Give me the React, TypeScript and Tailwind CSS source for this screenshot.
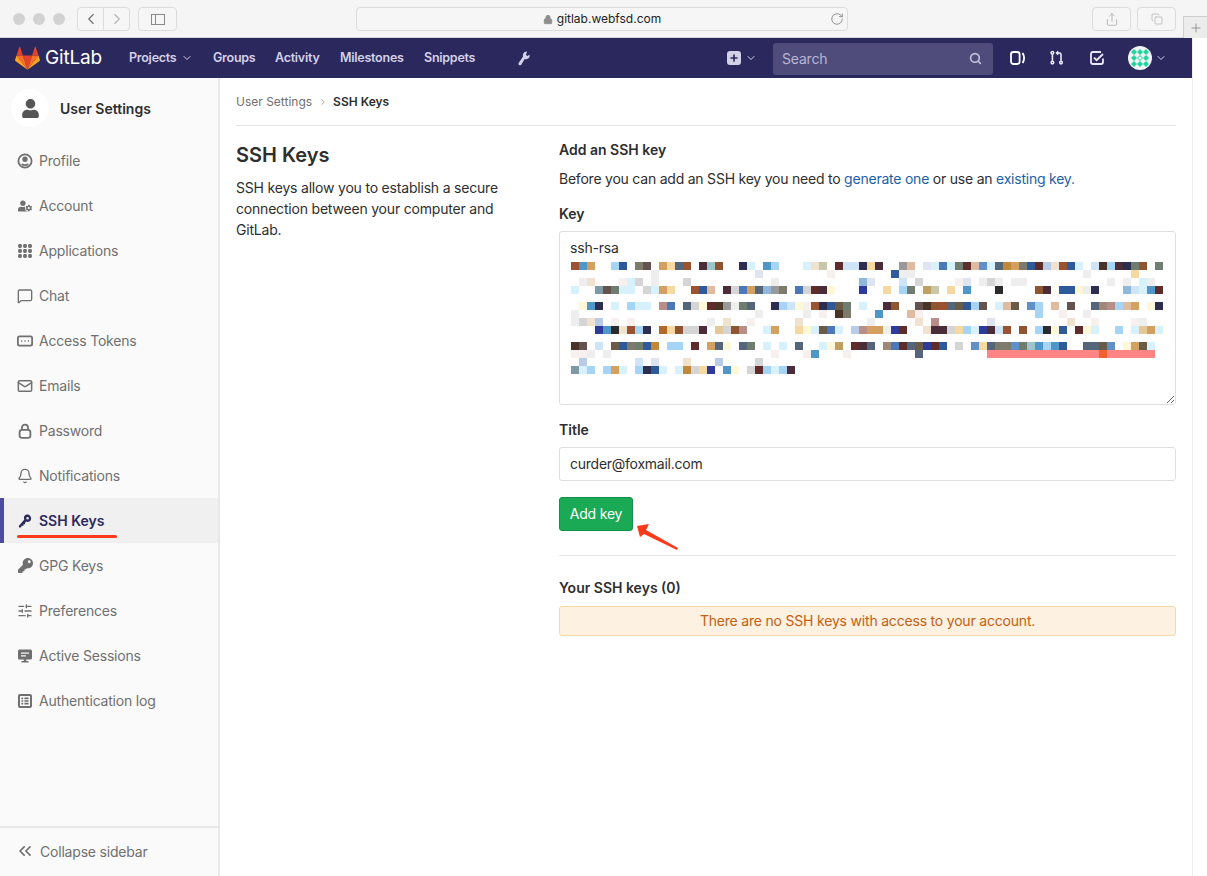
import { FC, ReactNode } from 'react'
import {
  ChevronDown,
  ChevronLeft,
  ChevronRight,
  ChevronsLeft,
  Lock,
  Mail,
  RotateCw,
  Search,
  Share,
  Copy,
  Plus,
  Bell,
  MessageSquare,
  SlidersHorizontal,
} from 'lucide-react'
import { FaKey, FaUserCog, FaUser } from 'react-icons/fa'

// palette for the blurred key block
const palette: Record<string, string> = {
  a: '#9a5230', b: '#5096c8', c: '#d4a060', d: '#a5d4f5', e: '#2f5a9a', f: '#7f7b6c',
  g: '#65524e', h: '#c08838', i: '#f6d9a0', j: '#55657a', k: '#4a2d38', l: '#5f2c2c',
  m: '#9cc5cc', n: '#8f5530', o: '#2d2d50', p: '#d8f2fd', q: '#efe3d0', r: '#c8c8a8',
  s: '#2e3a9a', t: '#cfe5f7', u: '#eeeeee', v: '#d5d5d5', w: '#999999', x: '#dfe5f0',
  y: '#fff8d8', z: '#f7f0ee', A: '#6f7c70', B: '#4a78b8', C: '#e0bba0', D: '#b88f88',
  E: '#6a5a48', F: '#2b2b2b', G: '#7f99a5', H: '#b8cce8', K: '#c0a060', L: '#90b8dc',
  M: '#ff8585', N: '#f06030', O: '#6090c8', P: '#a08878', Q: '#e5c898', R: '#b06a28',
  S: '#4a3428',
}

const keyRows = [
  '0a 1b 2c 5d 6e 8f 9g 11c 12i 13j 14a 16k 17m 18n 21o 22p 24b 25d 29p 30q 31r 33l 34t 35t 36o 37i 38k 41w 42C 44x 45p 46B 47p 48A 49l 50C 51O 52p 53j 54h 55c 56f 57e 58l 59H 60q 61a 62e 63p 65t 66S 67d 68k 69o 70A 71n 73A',
  '10u 23x 32z 40e 41u 42u 64u 70i',
  '0x 1u 2q 6z 7p 8v 10u 14v 25u 36L 37x 41t 43v 48z 49x 51u 52v 53u 55u 56u 67u 69u 71p 72u',
  '0p 3G 4g 5A 6p 7p 9v 10p 11c 12i 15a 16e 17C 19k 20v 21B 22c 23j 24L 25w 26f 28B 29v 30l 31k 32y 36s 39i 41d 42A 44K 45r 47i 49b 53F 58n 59k 61e 62e 63y 64u 65o 69L 70t 71p 72b 73l',
  '',
  '1y 2b 3o 5p 7d 8p 9p 11D 12B 14j 15v 16y 17l 18S 19w 20u 21A 22j 25o 26d 27t 28y 29z 30a 31o 32e 33E 34A 36p 39k 40n 43g 44S 45n 46a 47j 48E 49e 50d 51g 53p 54C 55E 57O 58d 60C 62g 65j 66P 67D 68d 69C 70c 72y 73o',
  '0u 23u 29u 31z 33S 34f 38b 42C 43z 58d 61z 64u',
  '0u 1v 2q 3H 5z 7z 17u 19q 22z 28q 37u 43q 45D 52x 62q 65z 70z 71u',
  '3s 4b 5F 6q 7a 8d 9o 11R 12i 13n 14v 15v 16k 18Q 19v 20n 21D 24p 25c 28i 29y 30p 31E 32B 33p 35H 36D 37c 38c 39u 40s 41l 44q 45k 46k 47v 48i 49d 50p 51s 52k 53t 54a 56n 58d 59F 60y 61e 63l 64y 65p 68d 70p 71Q 72c 73p',
  '',
  '0S 1g 3t 5E 6e 7f 8A 9e 10h 12d 13d 15l 17c 18j 19y 21j 22A 24p 26p 28j 31p 32y 33K 35l 36k 37j 39P 40B 41l 42j 43E 44s 45l 46e 48v 50O 51i 52j 53f 54f 55O 56A 57m 58b 59d 60b 61e 64j 65j 66E 67O 69y 70c 71E 72p',
  '0z 1z 2u 4u 25z 29z 30b 34z 43j 52M 53M 54M 55M 56M 57M 58M 59M 60M 61M 62M 63M 64M 65M 66N 67M 68M 69M 70M 71M 72M',
  '1H 8t 10x 14q 18H 23v',
  '0G 1p 2d 4d 5c 6p 8d 9o 10e 11p 13p 14h 15v 16i 17s 19b 20y 22v 23l 24d 25p 26d 27k',
].map((row) => {
  const cells: Record<number, string> = {}
  row.split(' ').filter(Boolean).forEach((c) => {
    cells[parseInt(c)] = palette[c[c.length - 1]]
  })
  return cells
})

const columns = Array.from({ length: 74 }, (_, i) => i)

const stroke = { fill: 'none', stroke: 'currentColor', strokeWidth: 1.8 }

const SideIcon: Record<string, ReactNode> = {
  Profile: (
    <svg viewBox="0 0 16 16" className="w-4 h-4" {...stroke}>
      <circle cx="8" cy="8" r="6.6" />
      <circle cx="8" cy="6.2" r="1.8" fill="currentColor" />
      <path d="M4.8 10.8c1.6 1.8 4.8 1.8 6.4 0" />
    </svg>
  ),
  Account: <FaUserCog className="w-[14px] h-[14px]" />,
  Applications: (
    <svg viewBox="0 0 14 14" className="w-[14px] h-[14px]" fill="currentColor">
      {[2, 7, 12].map((y) =>
        [2, 7, 12].map((x) => <rect key={`${x}-${y}`} x={x - 1.9} y={y - 1.9} width="3.8" height="3.8" rx="1.4" />),
      )}
    </svg>
  ),
  Chat: <MessageSquare className="w-4 h-4" strokeWidth={2} />,
  'Access Tokens': (
    <svg viewBox="0 0 16 16" className="w-4 h-4" {...stroke}>
      <rect x="0.9" y="3.4" width="14.2" height="9.2" rx="1.6" />
      <path d="M4.3 8h.9M7.6 8h.9M10.9 8h.9" />
    </svg>
  ),
  Emails: <Mail className="w-4 h-4" strokeWidth={2.2} />,
  Password: (
    <svg viewBox="0 0 16 16" className="w-4 h-4" {...stroke}>
      <rect x="2.6" y="6.8" width="10.8" height="8" rx="2.4" />
      <path d="M5 6.8V4.6a3 3 0 0 1 6 0v2.2" />
    </svg>
  ),
  Notifications: <Bell className="w-4 h-4" strokeWidth={2} />,
  'SSH Keys': (
    <svg viewBox="0 0 16 16" className="w-4 h-4" fill="currentColor">
      <path d="M9.2 1.6a4 4 0 0 1 4.6 5.6 4 4 0 0 1-4.6 1.4L8 9.9 8 11.3 6.5 11.3 6.5 12.8 5 12.8 3.7 14.6 2 14.6 1.8 13 7.3 6.6a4 4 0 0 1 1.9-5zM10.6 4a1.3 1.3 0 1 0 0 2.6 1.3 1.3 0 0 0 0-2.6z" />
    </svg>
  ),
  'GPG Keys': <FaKey className="w-[15px] h-[15px]" />,
  Preferences: <SlidersHorizontal className="w-4 h-4" strokeWidth={2} />,
  'Active Sessions': (
    <svg viewBox="0 0 16 16" className="w-4 h-4" fill="currentColor">
      <path fillRule="evenodd" d="M2.6 1.4h10.8c.9 0 1.6.7 1.6 1.6v7c0 .9-.7 1.6-1.6 1.6H9.2V13h2.3v1.6h-7V13h2.3v-1.4H2.6C1.7 11.6 1 10.9 1 10V3c0-.9.7-1.6 1.6-1.6zM4 4.4v1.4h8V4.4zm0 2.8v1.4h5V7.2z" />
    </svg>
  ),
  'Authentication log': (
    <svg viewBox="0 0 16 16" className="w-4 h-4" fill="currentColor">
      <path fillRule="evenodd" d="M3 1h10a2 2 0 0 1 2 2v10a2 2 0 0 1-2 2H3a2 2 0 0 1-2-2V3a2 2 0 0 1 2-2zm0 2v10h10V3zm1.4 1.6h1.8v1.6H4.4zm3 0h4.2v1.6H7.4zm-3 2.6h1.8v1.6H4.4zm3 0h4.2v1.6H7.4zm-3 2.6h1.8v1.6H4.4zm3 0h4.2v1.6H7.4z" />
    </svg>
  ),
}

const sideItems = Object.keys(SideIcon)

const GitLabLogo = () => (
  <svg viewBox="0 0 36 36" className="w-[25px] h-[25px]">
    <path fill="#e24329" d="M18 34.1 24.6 13.8H11.4z" />
    <path fill="#fc6d26" d="M18 34.1 11.4 13.8H2.1z" />
    <path fill="#fca326" d="M2.1 13.8.1 20c-.2.6 0 1.2.5 1.5L18 34.1z" />
    <path fill="#e24329" d="M2.1 13.8h9.3L7.4 1.5c-.2-.6-1-.6-1.2 0z" />
    <path fill="#fc6d26" d="M18 34.1 24.6 13.8h9.3z" />
    <path fill="#fca326" d="M33.9 13.8l2 6.2c.2.6 0 1.2-.5 1.5L18 34.1z" />
    <path fill="#e24329" d="M33.9 13.8h-9.3l4-12.3c.2-.6 1-.6 1.2 0z" />
  </svg>
)

const Avatar = () => (
  <svg viewBox="0 0 24 24" className="w-6 h-6">
    <circle cx="12" cy="12" r="12" fill="#f2f4f3" />
    {[6, 12, 18].map((y) =>
      [6, 12, 18].map((x) => (
        <path key={`${x}-${y}`} d={`M${x} ${y - 3}l3 3-3 3-3-3z`} fill="#1fd6a0" />
      )),
    )}
    <circle cx="12" cy="12" r="1.6" fill="#ffffff" />
  </svg>
)

const ChromeButton: FC<{ className: string; children: ReactNode }> = ({ className, children }) => (
  <div className={`h-[24px] flex items-center justify-center border border-[#dcdcdc] bg-[#f6f6f6] rounded-[4px] ${className}`}>
    {children}
  </div>
)

const BrowserBar = () => (
  <div className="h-[38px] shrink-0 bg-[#f5f5f5] border-b border-[#d6d6d6] flex items-start pt-[7px] pl-[13px] relative">
    <div className="flex items-center gap-2 h-[24px]">
      <span className="w-3 h-3 rounded-full bg-[#d2d2d2]" />
      <span className="w-3 h-3 rounded-full bg-[#d2d2d2]" />
      <span className="w-3 h-3 rounded-full bg-[#d2d2d2]" />
    </div>
    <div className="flex ml-3">
      <ChromeButton className="w-[27px] rounded-r-none">
        <ChevronLeft className="w-[18px] h-[18px] text-[#6e6e6e]" strokeWidth={1.5} />
      </ChromeButton>
      <ChromeButton className="w-[27px] -ml-px rounded-l-none">
        <ChevronRight className="w-[18px] h-[18px] text-[#b5b5b5]" strokeWidth={1.5} />
      </ChromeButton>
    </div>
    <ChromeButton className="w-[39px] ml-2">
      <span className="w-[14px] h-[11px] border border-[#8a8a8a] flex">
        <span className="w-[4px] border-r border-[#8a8a8a]" />
      </span>
    </ChromeButton>
    <ChromeButton className="w-[492px] ml-[179px] relative">
      <Lock className="w-[10px] h-[11px] text-[#8e8e8e] mr-[4px] fill-[#8e8e8e]" strokeWidth={2} />
      <span className="text-[12px] text-[#222]">gitlab.webfsd.com</span>
      <RotateCw className="absolute right-[3px] top-[4px] w-[14px] h-[14px] text-[#777]" strokeWidth={1.3} />
    </ChromeButton>
    <ChromeButton className="w-[39px] ml-[244px]">
      <Share className="w-[14px] h-[15px] text-[#a8a8a8]" strokeWidth={1.3} />
    </ChromeButton>
    <ChromeButton className="w-[39px] ml-[6px]">
      <Copy className="w-[12px] h-[12px] text-[#a8a8a8]" strokeWidth={1.3} />
    </ChromeButton>
    <div className="absolute left-[1183px] top-[16px] w-[24px] h-[22px] bg-[#ececec] border-l border-t border-[#cfcfcf] flex items-center justify-center">
      <Plus className="w-[14px] h-[14px] text-[#777]" strokeWidth={1.2} />
    </div>
  </div>
)

const NavBar = () => (
  <div className="h-[40px] shrink-0 flex">
    <div className="w-[1192px] bg-[#2b285e] flex items-center pl-[15px] text-[#d3d1e8]">
      <GitLabLogo />
      <span className="ml-[5px] w-[84px] text-[19px] text-white font-normal tracking-[-0.01em]">GitLab</span>
      <span className="text-[12.5px] font-semibold tracking-[-0.02em] flex items-center w-[84px]">
        Projects
        <ChevronDown className="w-[12px] h-[12px] ml-[5px]" strokeWidth={2} />
      </span>
      <span className="text-[12.5px] font-semibold tracking-[-0.02em] w-[62px]">Groups</span>
      <span className="text-[12.5px] font-semibold tracking-[-0.02em] w-[65px]">Activity</span>
      <span className="text-[12.5px] font-semibold tracking-[-0.02em] w-[84px]">Milestones</span>
      <span className="text-[12.5px] font-semibold tracking-[-0.02em] w-[92px]">Snippets</span>
      <svg viewBox="0 0 16 16" className="w-[15px] h-[15px]" fill="currentColor">
        <path d="M11 .6a4 4 0 0 0-3.500 5.300L3 12.400a1.700 1.700 0 0 0 2.600 2.200L9.300 8.600A4 4 0 0 0 14.400 3.700L12.300 5.400 10.500 4.200 11.800.7z" />
      </svg>
      <span className="ml-[196px] w-[14px] h-[14px] rounded-[3px] bg-[#d3d1e8] flex items-center justify-center">
        <Plus className="w-[10px] h-[10px] text-[#2b285e]" strokeWidth={4} />
      </span>
      <ChevronDown className="w-[12px] h-[12px] ml-[4px]" strokeWidth={2} />
      <div className="ml-[16px] w-[220px] h-[32px] bg-[#4f4b7b] rounded-[3px] flex items-center justify-between pl-[9px] pr-[11px] mt-[2px]">
        <span className="text-[14px] text-[#b8b6d4] pb-[2px] tracking-[-0.014em]">Search</span>
        <Search className="w-[13px] h-[13px] text-[#c5c3dc] -mt-[2px]" strokeWidth={3} />
      </div>
      <svg viewBox="0 0 16 16" className="w-4 h-4 ml-[17px] text-white" fill="none" stroke="currentColor" strokeWidth="1.8">
        <rect x="1" y="2" width="8.6" height="12" rx="2.4" />
        <path d="M12.6 3c1.8 3 1.8 7 0 10" />
      </svg>
      <svg viewBox="0 0 16 16" className="w-4 h-4 ml-[23px] text-[#e9e8f4]" fill="none" stroke="currentColor" strokeWidth="1.6">
        <circle cx="3.4" cy="2.8" r="1.3" />
        <path d="M3.4 4.2v6.6" />
        <circle cx="3.4" cy="12.6" r="1.3" />
        <path d="M7.8 3h2.6c1 0 1.6.7 1.6 1.6v6.2M9.2 1.4 7.6 3l1.6 1.6" />
        <circle cx="12" cy="12.6" r="1.3" />
      </svg>
      <svg viewBox="0 0 16 16" className="w-4 h-4 ml-[24px] text-[#e9e8f4]" fill="none" stroke="currentColor" strokeWidth="1.8">
        <path d="M14 8.4V12c0 1.2-.8 2-2 2H4c-1.2 0-2-.8-2-2V4c0-1.2.8-2 2-2h8" />
        <path d="m5 7.6 2.6 2.6 6.4-6.2" />
      </svg>
      <span className="ml-[23px]"><Avatar /></span>
      <ChevronDown className="w-[12px] h-[12px] ml-[3px]" strokeWidth={2} />
    </div>
    <div className="flex-1 bg-white border-l border-[#eeeeee]" />
  </div>
)

const Sidebar = () => (
  <div className="w-[220px] shrink-0 bg-[#fafafa] border-r-2 border-[#e8e8e8] flex flex-col">
    <div className="h-[60px] shrink-0 flex items-center pl-[11px]">
      <div className="w-[38px] h-[38px] rounded-full bg-white flex items-center justify-center text-[#555]">
        <FaUser className="w-[19px] h-[19px]" />
      </div>
      <span className="ml-[11px] text-[14px] font-semibold text-[#2e2e2e]">User Settings</span>
    </div>
    {sideItems.map((item) => {
      const active = item === 'SSH Keys'
      return (
        <div
          key={item}
          className={`h-[45px] shrink-0 flex items-center gap-[6px] pl-[17px] text-[14px] relative ${
            active ? 'bg-[#f0f0f0] text-[#2b285e] font-semibold' : 'text-[#707070] tracking-[-0.014em]'
          }`}
        >
          {active && <span className="absolute left-0 top-0 bottom-0 w-[4px] bg-[#4b4ba3]" />}
          <span className="w-4 h-4 flex items-center justify-center">{SideIcon[item]}</span>
          <span>{item}</span>
          {/* red annotation under the active item */}
          {active && <span className="absolute left-[17px] top-[37px] w-[100px] h-[3px] rounded-full bg-[#fb3a1c]" />}
        </div>
      )
    })}
    <div className="mt-auto h-[50px] pb-[2px] border-t-2 border-[#e8e8e8] flex items-center pl-[15px] text-[14px] text-[#707070] tracking-[-0.014em]">
      <ChevronsLeft className="w-[20px] h-[20px]" strokeWidth={2} />
      <span className="ml-[5px]">Collapse sidebar</span>
    </div>
  </div>
)

const KeyBlock = () => (
  <div className="h-[174px] border border-[#dfdfdf] rounded-[3px] pl-[11px] pt-[6px] overflow-auto resize-y bg-white">
    <div className="text-[14px] leading-[20px] text-[#2e2e2e] -ml-px tracking-[-0.014em]">ssh-rsa</div>
    <div className="mt-[4px] w-[592px]">
      {keyRows.map((cells, i) => (
        <div key={i} className="flex h-[8px]">
          {columns.map((c) => (
            <span key={c} className="w-[8px] h-[8px] shrink-0" style={{ backgroundColor: cells[c] }} />
          ))}
        </div>
      ))}
    </div>
  </div>
)

const MainPanel = () => (
  <div className="flex-1 bg-white px-4 text-[14px] text-[#2e2e2e]">
    <div className="h-[48px] border-b border-[#e5e5e5] flex items-center text-[12px] text-[#707070]">
      User Settings
      <ChevronRight className="w-[10px] h-[10px] mx-[6px] text-[#999]" strokeWidth={2} />
      <span className="font-semibold text-[#2e2e2e] -ml-px">SSH Keys</span>
    </div>
    <div className="flex">
      <div className="w-[323px] shrink-0 pt-[15px]">
        <h4 className="text-[20px] leading-[28px] font-semibold text-[#2e2e2e]">SSH Keys</h4>
        <p className="mt-[8px] w-[280px] leading-[21px] tracking-[-0.014em]">
          SSH keys allow you to establish a secure connection between your computer and GitLab.
        </p>
      </div>
      <div className="flex-1 pt-[14px]">
        <div className="font-semibold leading-[20px]">Add an SSH key</div>
        <p className="mt-[9px] leading-[20px] tracking-[-0.016em]">
          Before you can add an SSH key you need to <span className="text-[#1b5fa8]">generate one</span> or use an{' '}
          <span className="text-[#1b5fa8]">existing key.</span>
        </p>
        <div className="mt-[15px] font-semibold leading-[20px]">Key</div>
        <div className="mt-[7px]"><KeyBlock /></div>
        <div className="mt-[15px] font-semibold leading-[20px]">Title</div>
        <div className="mt-[7px] h-[34px] border border-[#dfdfdf] rounded-[3px] flex items-center px-[10px] pb-[2px] tracking-[-0.018em]">curder@foxmail.com</div>
        <div className="mt-[16px] relative">
          <button className="w-[74px] h-[34px] rounded-[3px] bg-[#1aaa55] border border-[#168f48] text-white pb-[2px] tracking-[-0.014em]">Add key</button>
          {/* red arrow pointing at the button */}
          <svg viewBox="0 0 56 36" className="absolute left-[71px] top-[23px] w-[56px] h-[36px]">
            <polygon points="7,6 19,4 16,10 48,28 47,30 14,14 10,17" fill="#fb3a1c" />
          </svg>
        </div>
        <div className="mt-[24px] border-t border-[#e5e5e5]" />
        <div className="mt-[22px] font-semibold leading-[20px]">Your SSH keys (0)</div>
        <div className="mt-[8px] h-[30px] bg-[#fdf1e2] border border-[#f5d9a8] rounded-[3px] flex items-center justify-center text-[#c4600f] pb-[2px] tracking-[-0.014em]">
          There are no SSH keys with access to your account.
        </div>
      </div>
    </div>
  </div>
)

const App: FC = () => (
  <div className="w-[1207px] h-[876px] overflow-hidden flex flex-col bg-white font-['Inter','Liberation_Sans',sans-serif]">
    <BrowserBar />
    <NavBar />
    <div className="flex-1 flex min-h-0">
      <Sidebar />
      <MainPanel />
      <div className="w-[15px] shrink-0 bg-white border-l border-[#eeeeee]" />
    </div>
  </div>
)

export default App
